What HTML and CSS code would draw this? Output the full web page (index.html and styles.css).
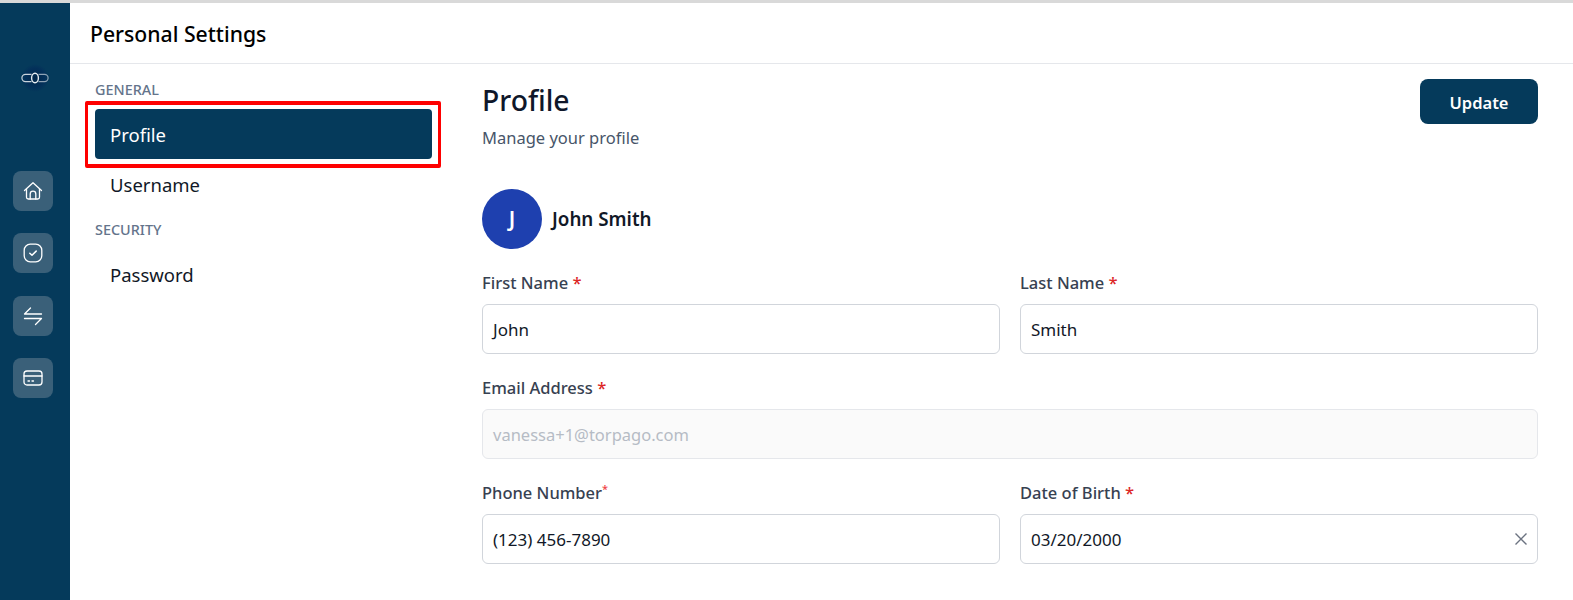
FILE: index.html
```html
<!DOCTYPE html>
<html lang="en">
<head>
    <meta charset="UTF-8">
    <meta name="viewport" content="width=device-width, initial-scale=1.0">
    <title>Personal Settings</title>
    <link rel="stylesheet" href="styles.css">
</head>
<body>
    <div class="topStrip"></div>
    <div class="app">
        <aside class="sidebar">
            <div class="logo">
                <svg width="36" height="28" viewBox="0 0 36 28" fill="none">
                    <defs>
                        <radialGradient id="logoBg" cx="50%" cy="50%" r="50%">
                            <stop offset="0" stop-color="#02264a"/>
                            <stop offset="0.7" stop-color="#03305a"/>
                            <stop offset="1" stop-color="#053a5b"/>
                        </radialGradient>
                    </defs>
                    <circle cx="18" cy="14" r="14" fill="url(#logoBg)"/>
                    <path d="M14.5 10.4H8.5a3.6 3.6 0 0 0 0 7.2h6" stroke="#c9d3dc" stroke-width="1.2"/>
                    <path d="M21.5 10.4h6a3.6 3.6 0 0 1 0 7.2h-6" stroke="#8fa3b5" stroke-width="1.2"/>
                    <ellipse cx="18" cy="14" rx="3.4" ry="4.8" stroke="#e6ebf0" stroke-width="1.4"/>
                </svg>
            </div>
            <nav class="iconNav">
                <div class="iconBtn">
                    <svg width="20" height="20" viewBox="0 0 20 20" fill="none" stroke="#fff" stroke-width="1.3" stroke-linejoin="round" stroke-linecap="round">
                        <path d="M1.5 9.5 10 1.8l8.5 7.7"/>
                        <path d="M3.5 8v8.2a1.8 1.8 0 0 0 1.8 1.8h9.4a1.8 1.8 0 0 0 1.8-1.8V8"/>
                        <path d="M7.2 18v-5a2.8 2.8 0 0 1 5.6 0v5"/>
                    </svg>
                </div>
                <div class="iconBtn">
                    <svg width="20" height="20" viewBox="0 0 20 20" fill="none" stroke="#fff" stroke-width="1.3" stroke-linejoin="round" stroke-linecap="round">
                        <rect x="1.2" y="1.2" width="17.6" height="17.6" rx="6"/>
                        <path d="M6.8 10.2l2.2 2.1 4.2-4.2" stroke-width="1.5"/>
                    </svg>
                </div>
                <div class="iconBtn">
                    <svg width="20" height="20" viewBox="0 0 20 20" fill="none" stroke="#fff" stroke-width="1.3" stroke-linejoin="round" stroke-linecap="round">
                        <path d="M1.5 8h17M1.5 8l6-6"/>
                        <path d="M18.5 12.5h-17M18.5 12.5l-6 6"/>
                    </svg>
                </div>
                <div class="iconBtn">
                    <svg width="20" height="20" viewBox="0 0 20 20" fill="none" stroke="#fff" stroke-width="1.3" stroke-linejoin="round" stroke-linecap="round">
                        <rect x="1" y="3" width="18" height="14" rx="3"/>
                        <path d="M1 8h18"/>
                        <path d="M5 13h1.5M9 13h1.5"/>
                    </svg>
                </div>
            </nav>
        </aside>

        <div class="page">
            <header class="pageHeader">Personal Settings</header>
            <div class="pageBody">
                <div class="settingsNav">
                    <div class="navGroup">GENERAL</div>
                    <div class="navItem active">Profile
                        <span class="redBox"></span>
                    </div>
                    <div class="navItem">Username</div>
                    <div class="navGroup second">SECURITY</div>
                    <div class="navItem">Password</div>
                </div>

                <main class="content">
                    <div class="contentTop">
                        <div>
                            <h1 class="title">Profile</h1>
                            <p class="subtitle">Manage your profile</p>
                        </div>
                        <button class="updateBtn">Update</button>
                    </div>

                    <div class="userRow">
                        <div class="avatar">J</div>
                        <div class="userName">John Smith</div>
                    </div>

                    <div class="formGrid">
                        <div class="field">
                            <div class="label">First Name <span class="req">*</span></div>
                            <div class="input">John</div>
                        </div>
                        <div class="field">
                            <div class="label">Last Name <span class="req">*</span></div>
                            <div class="input">Smith</div>
                        </div>
                        <div class="field wide">
                            <div class="label">Email Address <span class="req">*</span></div>
                            <div class="input disabled">vanessa+1@torpago.com</div>
                        </div>
                        <div class="field">
                            <div class="label">Phone Number<sup class="reqSmall">*</sup></div>
                            <div class="input">(123) 456-7890</div>
                        </div>
                        <div class="field">
                            <div class="label">Date of Birth <span class="req">*</span></div>
                            <div class="input hasClear">03/20/2000
                                <svg width="14" height="14" viewBox="0 0 14 14" fill="none" stroke="#6b7280" stroke-width="1.4">
                                    <path d="M1.5 1.5l11 11M12.5 1.5l-11 11"/>
                                </svg>
                            </div>
                        </div>
                    </div>
                </main>
            </div>
        </div>
    </div>
</body>
</html>
```

FILE: styles.css
```css
html, body {
    width: 1573px;
    height: 600px;
    margin: 0;
    padding: 0;
    overflow: hidden;
}

body {
    font-family: "Noto Sans", "Open Sans", sans-serif;
    background-color: #fff;
    color: #111827;
}

.topStrip {
    height: 3px;
    background-color: #d9d9d9;
}

.app {
    display: flex;
    height: 597px;
}

.sidebar {
    width: 70px;
    flex-shrink: 0;
    box-sizing: border-box;
    padding-left: 13px;
    background-color: #053a5b;
    display: flex;
    flex-direction: column;
}

.logo {
    margin-top: 61px;
    margin-left: 4px;
    height: 28px;
}

.logo svg {
    display: block;
}

.iconNav {
    margin-top: 79px;
    display: flex;
    flex-direction: column;
    gap: 22.3px;
}

.iconBtn {
    width: 40px;
    height: 40px;
    border-radius: 8px;
    background-color: #3a6079;
    display: flex;
    align-items: center;
    justify-content: center;
}

.page {
    flex: 1;
    min-width: 0;
}

.pageHeader {
    height: 61px;
    box-sizing: border-box;
    border-bottom: 1px solid #e5e7eb;
    padding: 17px 0 0 20px;
    font-size: 21.2px;
    line-height: 28px;
    font-weight: 500;
    color: #000;
}

.pageBody {
    display: flex;
}

.settingsNav {
    width: 337px;
    margin-left: 25px;
    flex-shrink: 0;
    padding-top: 15px;
}

.navGroup {
    font-size: 14.4px;
    line-height: 22px;
    font-weight: 500;
    color: #64748b;
    margin-bottom: 8px;
}

.navGroup.second {
    margin-top: 10px;
    margin-bottom: 8px;
}

.navItem {
    height: 50px;
    line-height: 51px;
    padding-left: 15px;
    border-radius: 4px;
    font-size: 18.5px;
    color: #111827;
    position: relative;
}

.navItem.active {
    background-color: #053a5b;
    color: #fff;
}

.redBox {
    position: absolute;
    left: -10px;
    right: -9px;
    top: -8px;
    bottom: -9px;
    border: 4px solid #fe0000;
    border-left-width: 3px;
    border-right-width: 3px;
    border-radius: 2px;
}

.content {
    width: 1056px;
    margin-left: 50px;
    padding-top: 15px;
}

.contentTop {
    display: flex;
    justify-content: space-between;
    align-items: flex-start;
}

.title {
    margin: 0;
    font-size: 28.3px;
    line-height: 42px;
    font-weight: 500;
    color: #0f172a;
}

.subtitle {
    margin: 5px 0 0;
    font-size: 16.5px;
    line-height: 24px;
    color: #475569;
}

.updateBtn {
    width: 118px;
    height: 45px;
    padding: 2px 0 0;
    border: 0;
    border-radius: 8px;
    background-color: #053a5b;
    color: #fff;
    font-family: inherit;
    font-size: 16.5px;
    font-weight: 600;
}

.userRow {
    display: flex;
    align-items: center;
    gap: 10px;
    margin-top: 39px;
}

.avatar {
    width: 60px;
    height: 60px;
    border-radius: 50%;
    background-color: #1e40af;
    color: #fff;
    font-size: 21px;
    font-weight: 600;
    display: flex;
    align-items: center;
    justify-content: center;
}

.userName {
    font-size: 18.8px;
    font-weight: 600;
    color: #111827;
}

.formGrid {
    margin-top: 22px;
    display: grid;
    grid-template-columns: 518px 518px;
    column-gap: 20px;
    row-gap: 22px;
}

.field.wide {
    grid-column: 1 / 3;
}

.label {
    font-size: 16.5px;
    line-height: 24px;
    font-weight: 500;
    color: #374151;
    margin-bottom: 9px;
}

.req {
    color: #dc2626;
}

.reqSmall {
    color: #ef4444;
    font-size: 11px;
    line-height: 0;
}

.input {
    height: 50px;
    box-sizing: border-box;
    border: 1px solid #d1d5db;
    border-radius: 6px;
    padding: 0 10px;
    font-size: 17px;
    line-height: 50px;
    color: #111827;
    position: relative;
}

.input.disabled {
    background-color: #fafafa;
    border-color: #e5e7eb;
    font-size: 16.5px;
    color: #b6bcc5;
}

.input.hasClear svg {
    position: absolute;
    right: 9px;
    top: 17px;
}
```
